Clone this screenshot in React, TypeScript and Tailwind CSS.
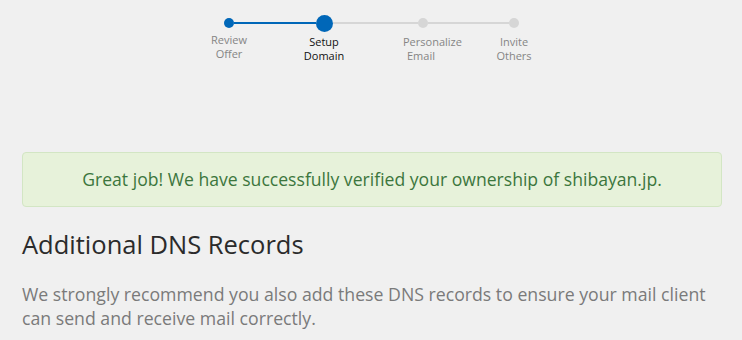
import React from "react";

export default function App() {
  const font = { fontFamily: '"Open Sans", "Noto Sans", sans-serif' };
  return (
    <div className="w-[742px] h-[340px] bg-[#f0f0f0] overflow-hidden" style={font}>
      {/* Stepper */}
      <div className="pt-[13px] pl-[224px]">
        <div className="flex items-center h-[20px]">
          <div className="w-[10px] h-[10px] rounded-full bg-[#0067b8]" />
          <div className="w-[82px] h-[2px] bg-[#0067b8]" />
          <div className="w-[17px] h-[17px] rounded-full bg-[#0067b8]" />
          <div className="w-[85px] h-[2px] bg-[#d6d6d6]" />
          <div className="w-[10px] h-[10px] rounded-full bg-[#d6d6d6]" />
          <div className="w-[81px] h-[2px] bg-[#d6d6d6]" />
          <div className="w-[10px] h-[10px] rounded-full bg-[#d6d6d6]" />
        </div>
      </div>
      <div className="flex pl-[182px] text-[11px] leading-[14px]">
        <div className="w-[94px] text-center text-[#858585] mt-[0px]">
          <div>Review</div>
          <div>Offer</div>
        </div>
        <div className="w-[96px] text-center text-[#111111] mt-[2px]">
          <div>Setup</div>
          <div>Domain</div>
        </div>
        <div className="w-[102px] pl-[31px] text-[#858585] mt-[2px]">
          <div>Personalize</div>
          <div className="pl-[4px]">Email</div>
        </div>
        <div className="w-[80px] text-center text-[#858585] mt-[2px]">
          <div>Invite</div>
          <div>Others</div>
        </div>
      </div>

      {/* Alert */}
      <div className="mt-[89px] ml-[22px] w-[700px] h-[55px] rounded-[4px] border border-[#d3e6c4] bg-[#e7f2da] flex items-center justify-center text-[#3c763d] text-[17.6px]">
        Great job! We have successfully verified your ownership of shibayan.jp.
      </div>

      {/* Heading */}
      <div className="ml-[22px] mt-[21px] text-[25.5px] leading-[32px] text-[#2b2b2b]">
        Additional DNS Records
      </div>

      {/* Paragraph */}
      <div className="ml-[22px] mt-[22px] w-[700px] text-[17.7px] leading-[24px] text-[#7a7a7a]">
        We strongly recommend you also add these DNS records to ensure your mail client can send and receive mail correctly.
      </div>
    </div>
  );
}
